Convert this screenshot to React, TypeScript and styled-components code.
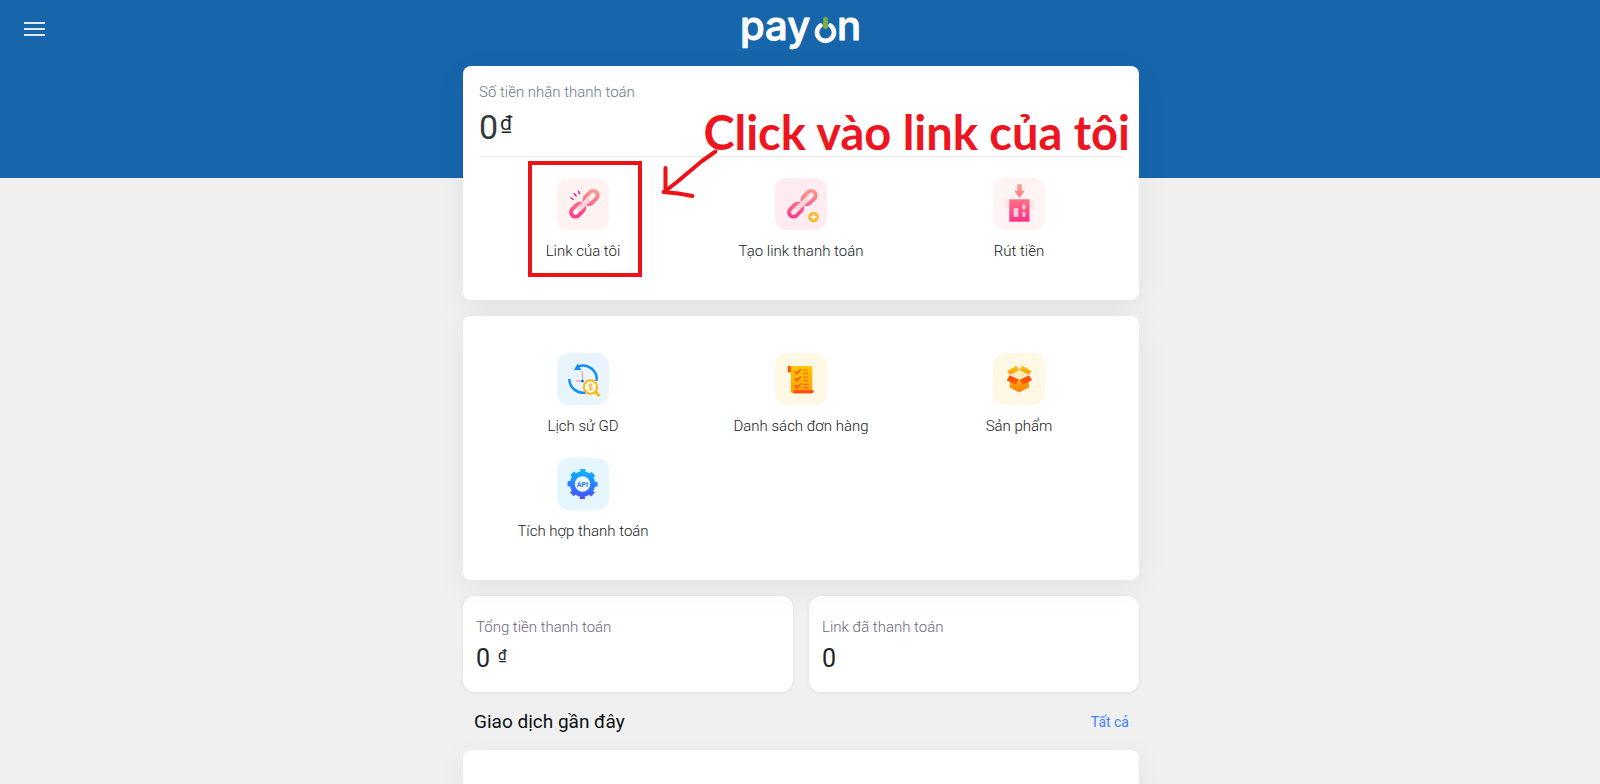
import React from "react";
import styled, { createGlobalStyle } from "styled-components";

const GlobalStyle = createGlobalStyle`
  *, *::before, *::after { box-sizing: border-box; }
  body {
    margin: 0;
    background: #f0f0f0;
    color: #212529;
    font-family: Roboto, "Liberation Sans", sans-serif;
    font-size: 15px;
    line-height: 20px;
  }
  h1, h2, p { margin: 0; }
`;

const Page = styled.div`
  min-height: 100vh;
  background: linear-gradient(#1766ac 178px, transparent 178px);
  overflow: hidden;
  height: 100vh;
`;

const TopBar = styled.header`
  display: grid;
  grid-template-columns: 1fr auto 1fr;
  align-items: center;
  height: 66px;
  padding: 0 24px 8px;
`;

const MenuButton = styled.button`
  display: flex;
  flex-direction: column;
  gap: 4px;
  width: 21px;
  padding: 0;
  border: 0;
  background: none;
  cursor: pointer;
`;

const MenuLine = styled.span`
  height: 2px;
  background: #dfeaf4;
`;

const LogoText = styled.text`
  font-family: Inter, sans-serif;
  font-size: 40px;
  font-weight: 500;
  fill: #fff;
  stroke: #fff;
  stroke-width: 1px;
  stroke-linejoin: round;
`;

const Content = styled.main`
  display: flex;
  flex-direction: column;
  gap: 16px;
  max-width: 708px;
  margin: 0 auto;
  padding: 0 15px 0 17px;
`;

const Card = styled.section`
  position: relative;
  padding: 0 11px;
  border-radius: 8px;
  background: #fff;
  box-shadow: 0 8px 32px rgba(0, 0, 0, 0.06);
`;

const Balance = styled.div`
  margin: 0 5px;
  padding: 16px 0 9px;
  border-bottom: 1px solid #ebebeb;
`;

const Muted = styled.h2<{ $tone: string }>`
  font-size: 15px;
  font-weight: 300;
  line-height: 20px;
  color: ${(p) => p.$tone};
`;

const Amount = styled.p<{ $large?: boolean }>`
  display: flex;
  align-items: flex-start;
  gap: ${(p) => (p.$large ? 2 : 8)}px;
  margin-top: 6px;
  font-size: ${(p) => (p.$large ? 34 : 25)}px;
  font-weight: 400;
  line-height: ${(p) => (p.$large ? 39 : 32)}px;
  color: ${(p) => (p.$large ? "#343a40" : "#212529")};
`;

const Currency = styled.span<{ $large?: boolean }>`
  font-size: ${(p) => (p.$large ? 21 : 15)}px;
  line-height: ${(p) => (p.$large ? 30 : 24)}px;
  color: #212529;
`;

const Tiles = styled.nav<{ $top: number; $bottom: number }>`
  display: grid;
  grid-template-columns: repeat(3, 1fr);
  row-gap: 22px;
  padding: ${(p) => p.$top}px 0 ${(p) => p.$bottom}px;
`;

const Tile = styled.a`
  position: relative;
  display: flex;
  flex-direction: column;
  align-items: center;
  gap: 11px;
  color: #16191d;
  font-weight: 300;
  text-decoration: none;
`;

const IconBox = styled.span<{ $bg: string }>`
  width: 52px;
  height: 52px;
  border-radius: 12px;
  background: ${(p) => p.$bg};
  svg { display: block; }
`;

const Highlight = styled.span`
  position: absolute;
  top: -17px;
  left: 50%;
  width: 114px;
  height: 116px;
  margin-left: -55px;
  border: 4px solid #ed1118;
`;

const Callout = styled.p`
  position: absolute;
  top: 38px;
  right: 9px;
  color: #ed1620;
  font-family: Lato, "Open Sans", sans-serif;
  font-size: 47px;
  font-weight: 700;
  line-height: 56px;
  white-space: nowrap;
`;

const Arrow = styled.svg`
  position: absolute;
  top: 80px;
  left: 196px;
`;

const Stats = styled.div`
  display: grid;
  grid-template-columns: 1fr 1fr;
  gap: 16px;
`;

const Stat = styled.section`
  height: 96px;
  padding: 21px 13px;
  border-radius: 12px;
  background: #fff;
  box-shadow: 0 1px 4px rgba(0, 0, 0, 0.07);
`;

const SectionHead = styled.div`
  display: flex;
  align-items: center;
  justify-content: space-between;
  height: 26px;
  padding: 2px 10px 0 11px;
`;

const SectionTitle = styled.h1`
  font-size: 19px;
  font-weight: 400;
  line-height: 24px;
  color: #0c1014;
`;

const AllLink = styled.a`
  font-size: 14px;
  color: #3d82ff;
  text-decoration: none;
`;

const RecentCard = styled(Card)`
  min-height: 160px;
`;

function Logo() {
  return (
    <svg width="124" height="58" viewBox="0 0 124 58" role="img" aria-label="payon">
      <LogoText x="2" y="40">pay</LogoText>
      <path d="M82.500 25.500a8.500 8.500 0 1 0 10 0" fill="none" stroke="#fff" strokeWidth="4.600" strokeLinecap="round" />
      <path d="M87.500 19.300v7.400" stroke="#7cb03a" strokeWidth="4.800" strokeLinecap="round" />
      <LogoText x="99" y="40">n</LogoText>
    </svg>
  );
}

function ChainLinks({ id }: { id: string }) {
  return (
    <>
      <defs>
        <linearGradient id={id} gradientUnits="userSpaceOnUse" x1="0" y1="11" x2="0" y2="40">
          <stop offset="0" stopColor="#ff9c8c" />
          <stop offset="1" stopColor="#ff3888" />
        </linearGradient>
      </defs>
      <g fill="none" stroke={`url(#${id})`} strokeWidth="3.800">
        <path d="M28.600 18.600 33.100 14.100A4.400 4.400 0 0 1 39.400 20.400L34.900 24.900A4.400 4.400 0 0 1 28.600 18.600z" />
        <path d="M15.300 31.100 19.800 26.600A4.400 4.400 0 0 1 26.100 32.900L21.600 37.400A4.400 4.400 0 0 1 15.300 31.100z" />
      </g>
      <path d="m21.500 31.500 11-10.800" stroke="#ffd3dc" strokeWidth="5" />
    </>
  );
}

function MyLinkIcon() {
  return (
    <svg width="52" height="52" viewBox="0 0 52 52" aria-hidden="true">
      <ChainLinks id="chainA" />
      <path d="m13.500 19.500 3.200 2.300M17 15.200l2.500 3.500M21.500 12.700l1 3.500" stroke="#e3177e" strokeWidth="1.400" />
    </svg>
  );
}

function NewLinkIcon() {
  return (
    <svg width="52" height="52" viewBox="0 0 52 52" aria-hidden="true">
      <ChainLinks id="chainB" />
      <circle cx="38.500" cy="39" r="5.300" fill="#fbb82c" />
      <path d="M38.500 36v6M35.500 39h6" stroke="#fff" strokeWidth="1.500" />
    </svg>
  );
}

function WithdrawIcon() {
  return (
    <svg width="52" height="52" viewBox="0 0 52 52" aria-hidden="true">
      <defs>
        <linearGradient id="safe" x1="0" y1="0" x2="0" y2="1">
          <stop offset="0" stopColor="#ff7187" />
          <stop offset="1" stopColor="#ff3187" />
        </linearGradient>
        <linearGradient id="drop" x1="0" y1="0" x2="0" y2="1">
          <stop offset="0" stopColor="#ffa18e" />
          <stop offset="1" stopColor="#ff7a86" />
        </linearGradient>
      </defs>
      <rect x="12" y="21.500" width="29" height="9.500" fill="#ffe4e8" />
      <path d="M24.300 6.200h4.500v6.300h3l-5.300 7.500-5.300-7.500h3.100z" fill="url(#drop)" />
      <rect x="16.300" y="21.300" width="20.200" height="22.400" fill="url(#safe)" />
      <g fill="#ffd2de">
        <rect x="20.700" y="30" width="4.600" height="9" rx="1" />
        <rect x="29.500" y="26.500" width="2.800" height="5" rx="1" />
        <rect x="29.500" y="33.700" width="2.800" height="5.300" rx="1" />
      </g>
    </svg>
  );
}

function HistoryIcon() {
  return (
    <svg width="52" height="52" viewBox="0 0 52 52" aria-hidden="true">
      <g fill="none" stroke="#0f8df8" strokeWidth="2.500">
        <path d="M21 13.400a13.800 13.800 0 0 1 18.600 14.600" />
        <path d="M12.300 26a13.800 13.800 0 0 0 16.200 13.500" />
      </g>
      <path d="m20.700 10.700 3.500 6.200-7.400.1z" fill="#0f8df8" />
      <path d="M25.500 18v10h-6.800" fill="none" stroke="#f79cb4" strokeWidth="1.300" />
      <circle cx="25.500" cy="28" r="1.500" fill="#0f7be8" />
      <path d="m38.500 39 4 4" stroke="#ffb60d" strokeWidth="2.800" />
      <circle cx="33.500" cy="34" r="6.700" fill="#fff8e6" stroke="#ffb60d" strokeWidth="1.900" />
      <path d="M35.700 32.200c-.5-.9-4-1-4 .5 0 1.700 4 .9 4 2.600 0 1.500-3.600 1.500-4.300.4M33.600 30v8" fill="none" stroke="#ffb02e" strokeWidth="1" />
    </svg>
  );
}

function OrdersIcon() {
  return (
    <svg width="52" height="52" viewBox="0 0 52 52" aria-hidden="true">
      <defs>
        <linearGradient id="paper" x1="0" y1="0" x2="0" y2="1">
          <stop offset="0" stopColor="#ffc900" />
          <stop offset="1" stopColor="#ff9c0b" />
        </linearGradient>
      </defs>
      <path d="M12.700 13h4v6.300h-4z" fill="#ff4d14" />
      <path d="M15.300 13h21.200l.8 1.500v25.800H17.300l-1.500-1.500V15z" fill="url(#paper)" />
      <path d="M18.700 37.200h20v1.500l-1 1.600h-19z" fill="#ff4a10" />
      <path d="m19.700 18.200 2 2.300 4.200-4.200M19.700 25.400l2 2.300 4.200-4.200M19.700 32.600l2 2.300 4.200-4.200" fill="none" stroke="#ff5a14" strokeWidth="1.700" />
      <path d="M28.300 17h5M28.300 20.300h5M28.300 24.200h5M28.300 27.500h5M28.300 31.400h5M28.300 34.700h5" stroke="#ff6a14" strokeWidth="1.200" />
    </svg>
  );
}

function ProductIcon() {
  return (
    <svg width="52" height="52" viewBox="0 0 52 52" aria-hidden="true">
      <defs>
        <linearGradient id="flap" x1="0" y1="0" x2="0" y2="1">
          <stop offset="0" stopColor="#ffc400" />
          <stop offset="1" stopColor="#ff9a0c" />
        </linearGradient>
        <linearGradient id="carton" x1="0" y1="0" x2="0" y2="1">
          <stop offset="0" stopColor="#ffb000" />
          <stop offset="1" stopColor="#ff7a12" />
        </linearGradient>
      </defs>
      <path d="M16.700 27.500 26.300 26.300l9.700 1.200v7l-9.700 4.800-9.600-4.800z" fill="url(#carton)" />
      <path d="m17 21.700 9.300-4.500 9.400 4.500-9.400 4.600z" fill="#ffefb8" />
      <path d="m14 18.300 9.300-5.600 3 4.300-9.300 4.700zM38.700 18.300l-9.400-5.600-3 4.300 9.400 4.700z" fill="url(#flap)" />
      <path d="m16.700 22.300 8.900 4.200-2.900 4.900-9-4.100zM36 22.300l-8.900 4.200 2.900 4.900 9-4.100z" fill="#ff5208" />
    </svg>
  );
}

const ApiLabel = styled.text`
  font-family: Roboto, sans-serif;
  font-size: 7px;
  font-weight: 700;
  text-anchor: middle;
  fill: #2f74f5;
`;

function ApiIcon() {
  return (
    <svg width="52" height="52" viewBox="0 0 52 52" aria-hidden="true">
      <defs>
        <linearGradient id="gear" gradientUnits="userSpaceOnUse" x1="0" y1="11" x2="0" y2="41">
          <stop offset="0" stopColor="#05baff" />
          <stop offset="1" stopColor="#4b4dff" />
        </linearGradient>
      </defs>
      <circle cx="25.500" cy="26" r="10.200" fill="#eef8ff" stroke="url(#gear)" strokeWidth="5" />
      <circle cx="25.500" cy="26" r="13.300" fill="none" stroke="url(#gear)" strokeWidth="3.400" strokeDasharray="5.220 5.226" strokeDashoffset="2.610" />
      <ApiLabel x="25.500" y="28.500">API</ApiLabel>
    </svg>
  );
}

type TileData = { label: string; bg: string; icon: React.ReactNode; marked?: boolean };

const paymentTiles: TileData[] = [
  { label: "Link của tôi", bg: "#fff2f2", icon: <MyLinkIcon />, marked: true },
  { label: "Tạo link thanh toán", bg: "#ffecf2", icon: <NewLinkIcon /> },
  { label: "Rút tiền", bg: "#fff4f4", icon: <WithdrawIcon /> },
];

const toolTiles: TileData[] = [
  { label: "Lịch sử GD", bg: "#e8f5ff", icon: <HistoryIcon /> },
  { label: "Danh sách đơn hàng", bg: "#fff8e5", icon: <OrdersIcon /> },
  { label: "Sản phẩm", bg: "#fff8e5", icon: <ProductIcon /> },
  { label: "Tích hợp thanh toán", bg: "#e5f6ff", icon: <ApiIcon /> },
];

function TileLink({ tile }: { tile: TileData }) {
  return (
    <Tile href="#">
      <IconBox $bg={tile.bg}>{tile.icon}</IconBox>
      <span>{tile.label}</span>
      {tile.marked && <Highlight />}
    </Tile>
  );
}

export default function App() {
  return (
    <>
      <GlobalStyle />
      <Page>
        <TopBar>
          <MenuButton type="button" aria-label="Menu">
            <MenuLine />
            <MenuLine />
            <MenuLine />
          </MenuButton>
          <Logo />
        </TopBar>
        <Content>
          <Card>
            <Balance>
              <Muted $tone="#687687">Số tiền nhận thanh toán</Muted>
              <Amount $large>
                0<Currency $large>₫</Currency>
              </Amount>
            </Balance>
            <Tiles $top={21} $bottom={39}>
              {paymentTiles.map((t) => (
                <TileLink key={t.label} tile={t} />
              ))}
            </Tiles>
            <Callout>Click vào link của tôi</Callout>
            <Arrow width="62" height="54" viewBox="0 0 62 54" fill="none" stroke="#ed1118" strokeWidth="4" strokeLinecap="round" strokeLinejoin="round" aria-hidden="true">
              <path d="M56.500 5.500 43 15 18 36 5 46M6.500 22v24M4.500 46l15 1.500 14 2.500" />
            </Arrow>
          </Card>
          <Card>
            <Tiles $top={37} $bottom={39}>
              {toolTiles.map((t) => (
                <TileLink key={t.label} tile={t} />
              ))}
            </Tiles>
          </Card>
          <Stats>
            <Stat>
              <Muted $tone="#6c677c">Tổng tiền thanh toán</Muted>
              <Amount>
                0<Currency>₫</Currency>
              </Amount>
            </Stat>
            <Stat>
              <Muted $tone="#6c677c">Link đã thanh toán</Muted>
              <Amount>0</Amount>
            </Stat>
          </Stats>
          <SectionHead>
            <SectionTitle>Giao dịch gần đây</SectionTitle>
            <AllLink href="#">Tất cả</AllLink>
          </SectionHead>
          <RecentCard />
        </Content>
      </Page>
    </>
  );
}
